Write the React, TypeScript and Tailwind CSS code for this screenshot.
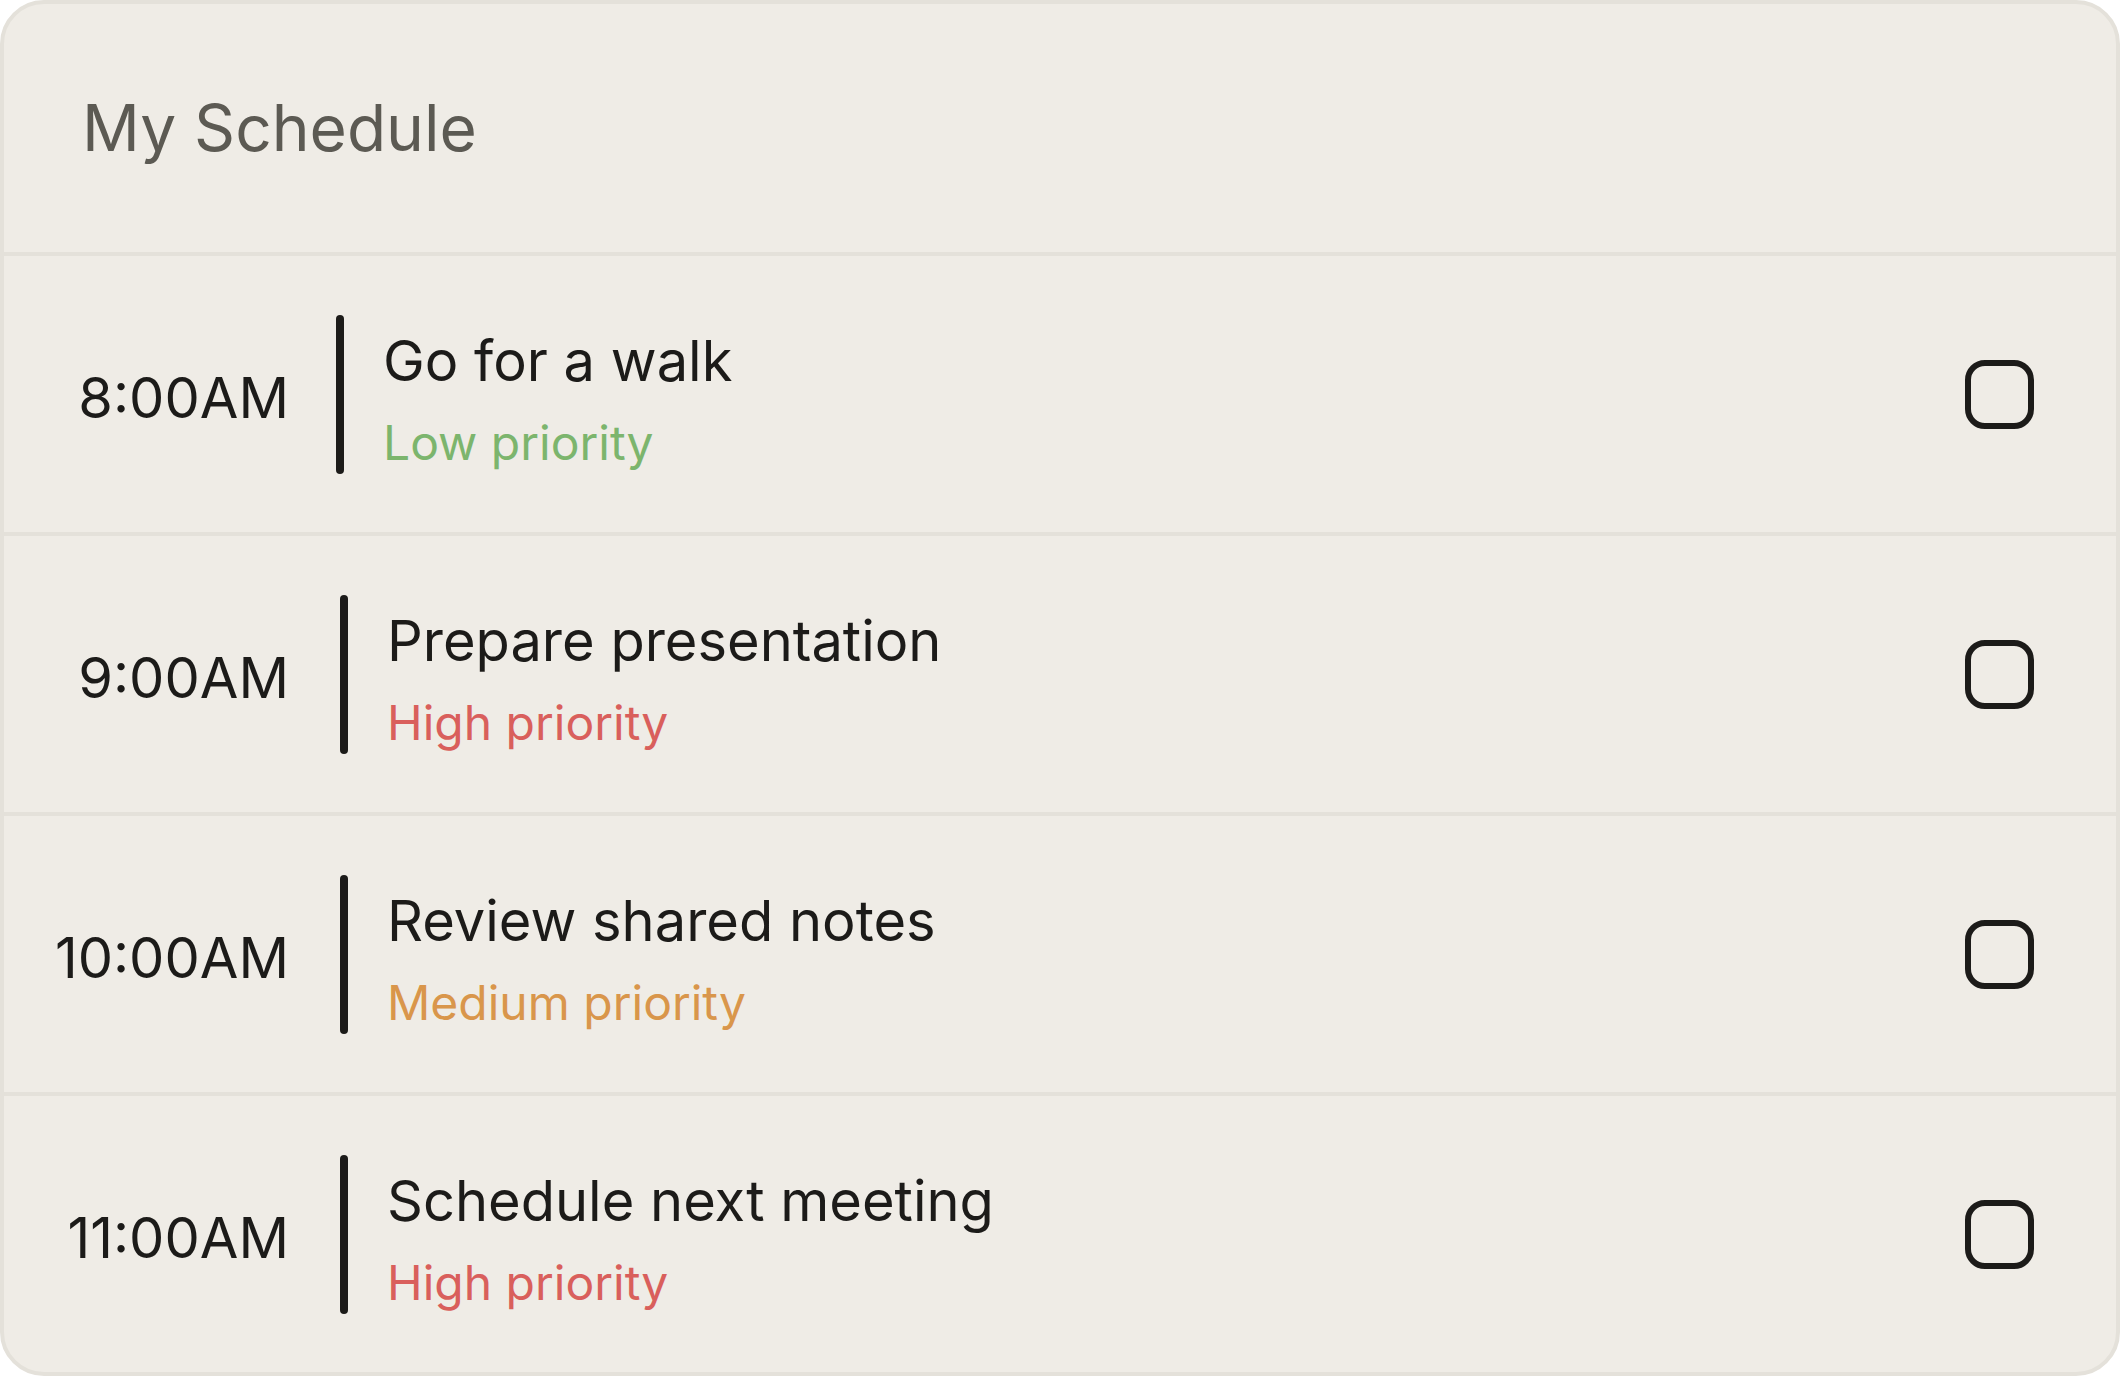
import React from "react";

type Item = { time: string; title: string; priority: string; color: string; barMl: string };

const items: Item[] = [
  { time: "8:00AM", title: "Go for a walk", priority: "Low priority", color: "text-[#7cb56d]", barMl: "ml-[47px]" },
  { time: "9:00AM", title: "Prepare presentation", priority: "High priority", color: "text-[#d95f5c]", barMl: "ml-[51px]" },
  { time: "10:00AM", title: "Review shared notes", priority: "Medium priority", color: "text-[#d9964b]", barMl: "ml-[51px]" },
  { time: "11:00AM", title: "Schedule next meeting", priority: "High priority", color: "text-[#d95f5c]", barMl: "ml-[51px]" },
];

export default function App() {
  return (
    <div className="w-[2120px] h-[1376px] bg-white" style={{ fontFamily: "Inter, 'Noto Sans', sans-serif" }}>
      <div className="w-full h-full bg-[#efece6] border-4 border-[#e4e1da] rounded-[44px] overflow-hidden flex flex-col">
        <div className="h-[252px] flex items-center pl-[78px] border-b-4 border-[#e4e1da] shrink-0">
          <h1 className="text-[64px] leading-[78px] font-normal text-[#5c5a53]">My Schedule</h1>
        </div>
        {items.map((it, i) => {
          const last = i === items.length - 1;
          return (
            <div
              key={i}
              className={
                last
                  ? "h-[276px] shrink-0 flex items-center"
                  : "h-[280px] shrink-0 flex items-center border-b-4 border-[#e4e1da]"
              }
            >
              <div className="w-[285px] text-right pt-[7px] text-[56px] leading-[68px] text-[#1c1b19]">{it.time}</div>
              <div className={`${it.barMl} w-[8px] h-[159px] rounded-full bg-[#1c1b19]`} />
              <div className="ml-[39px] pt-[10px] flex flex-col gap-[19px]">
                <div className="text-[56px] leading-[68px] text-[#1c1b19]">{it.title}</div>
                <div className={`text-[48px] leading-[58px] ${it.color}`}>{it.priority}</div>
              </div>
              <div className="ml-auto mr-[82px] w-[69px] h-[69px] border-[6px] border-[#1c1b19] rounded-[20px]" />
            </div>
          );
        })}
      </div>
    </div>
  );
}
